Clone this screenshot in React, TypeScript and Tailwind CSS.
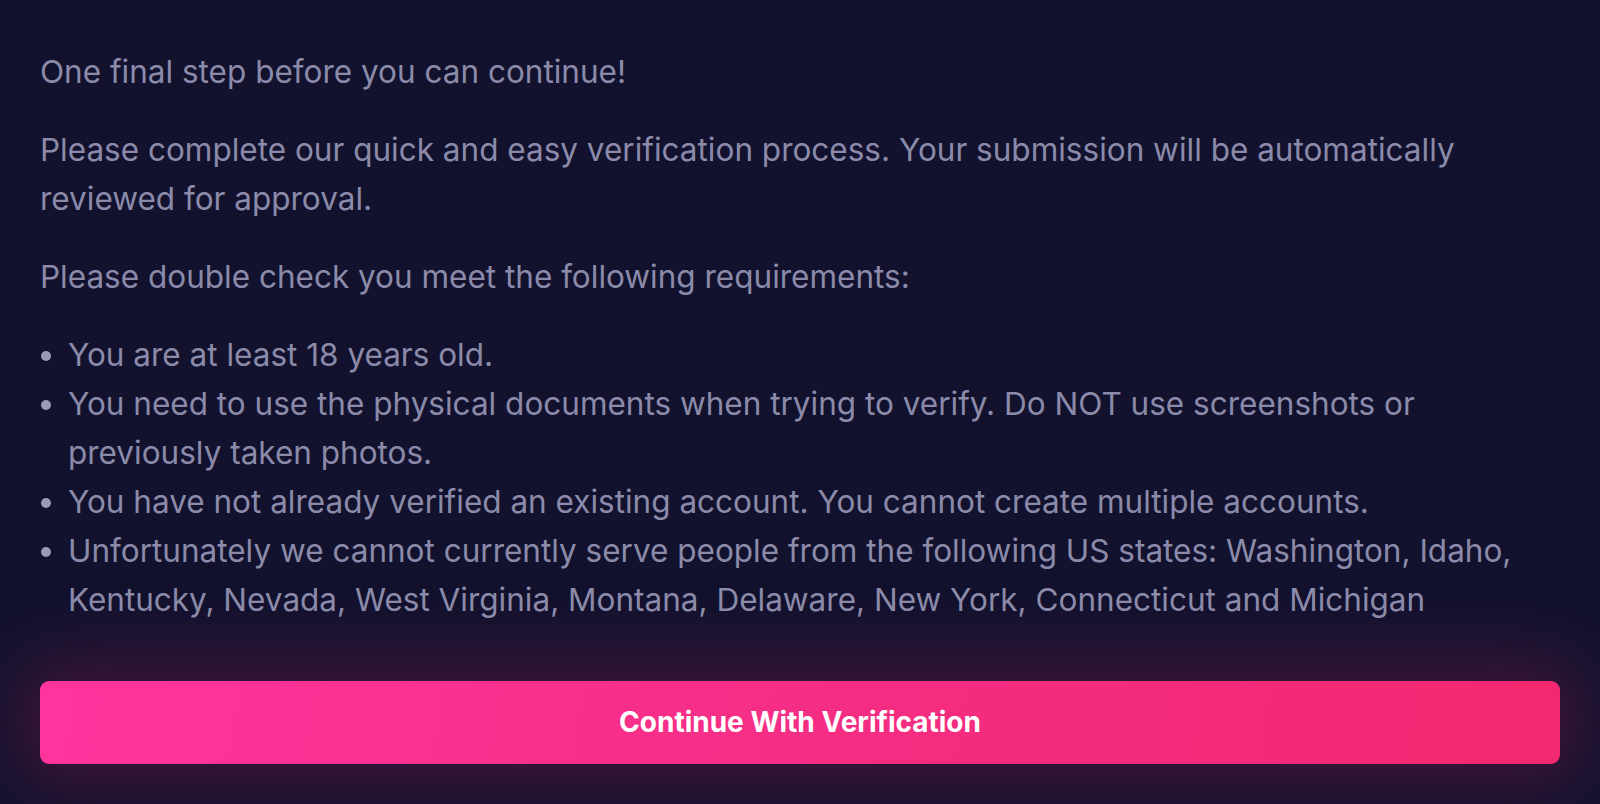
export default function App() {
  const requirements = [
    'You are at least 18 years old.',
    'You need to use the physical documents when trying to verify. Do NOT use screenshots or previously taken photos.',
    'You have not already verified an existing account. You cannot create multiple accounts.',
    'Unfortunately we cannot currently serve people from the following US states: Washington, Idaho, Kentucky, Nevada, West Virginia, Montana, Delaware, New York, Connecticut and Michigan',
  ];

  return (
    <div
      className="min-h-[804px] w-full bg-[#12122e] px-10 pt-[47px] pb-10 text-[31.5px] leading-[49px] text-[#8b8ba9]"
      style={{ fontFamily: 'Inter, "Noto Sans", sans-serif' }}
    >
      <p>One final step before you can continue!</p>
      <p className="mt-[29px]">
        Please complete our quick and easy verification process. Your submission will be automatically
        reviewed for approval.
      </p>
      <p className="mt-[29px]">Please double check you meet the following requirements:</p>
      <ul className="mt-[29px] list-disc pl-[28px] marker:text-[#9a9ab4]">
        {requirements.map((item) => (
          <li key={item}>{item}</li>
        ))}
      </ul>

      <div className="mt-[57px]">
        <button className="flex h-[83px] w-full items-center justify-center rounded-[9px] bg-[linear-gradient(100deg,#ff359e_0%,#f42d82_55%,#f22870_100%)] text-[28px] font-bold text-white shadow-[0_0_70px_22px_rgba(180,30,90,0.28)]">
          Continue With Verification
        </button>
      </div>
    </div>
  );
}
